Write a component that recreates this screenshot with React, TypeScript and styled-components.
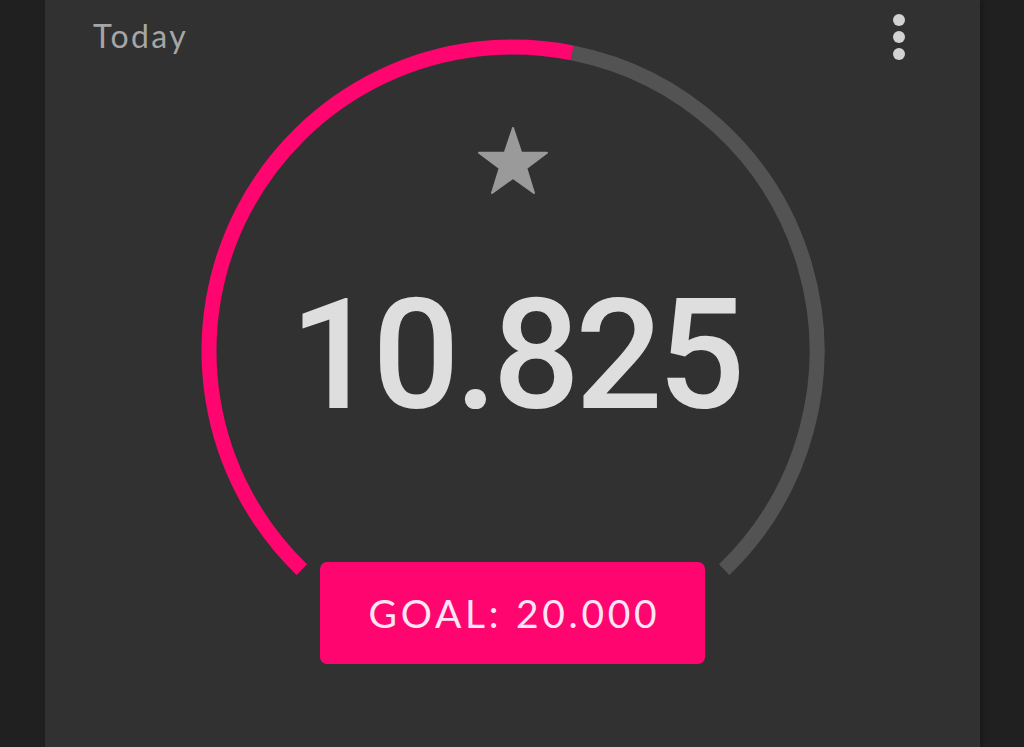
import * as React from "react";
import styled, { createGlobalStyle } from "styled-components";

const GlobalStyle = createGlobalStyle`
  html, body {
    margin: 0;
    padding: 0;
    background: #202020;
    overflow: hidden;
  }
`;

const Page = styled.div`
  display: flex;
  padding-left: 45px;
  height: 747px;
`;

const Card = styled.div`
  width: 935px;
  height: 747px;
  background: #313131;
  box-shadow: 3px 0 5px rgba(0, 0, 0, 0.25);
  display: grid;
  grid-template-columns: 1fr;
  grid-template-rows: auto;
  align-items: start;
`;

const Header = styled.div`
  grid-area: 1 / 1;
  display: flex;
  justify-content: space-between;
  align-items: flex-start;
  padding: 14px 75px 0 48px;
  position: relative;
  z-index: 1;
`;

const Title = styled.span`
  margin-top: 6px;
  font-family: Lato, "Open Sans", sans-serif;
  font-size: 32px;
  line-height: 1;
  letter-spacing: 2.4px;
  color: #a6a6a6;
`;

const MenuButton = styled.div`
  display: flex;
  flex-direction: column;
  gap: 5px;
  cursor: pointer;
`;

const Dot = styled.span`
  width: 12px;
  height: 12px;
  border-radius: 50%;
  background: #d2d2d2;
`;

const Gauge = styled.div`
  grid-area: 1 / 1;
  justify-self: center;
  margin-top: 31px;
  width: 640px;
  height: 640px;
  position: relative;
  display: flex;
  flex-direction: column;
  align-items: center;
`;

const Ring = styled.svg`
  position: absolute;
  inset: 0;
`;

const StarIcon = styled.svg`
  margin-top: 96px;
  position: relative;
`;

const Count = styled.div`
  margin-top: 82px;
  margin-right: -5px;
  position: relative;
  font-family: Roboto, "Open Sans", sans-serif;
  font-size: 154px;
  font-weight: 500;
  letter-spacing: -5px;
  line-height: 1;
  height: 154px;
  color: #dedede;
`;

const GoalButton = styled.button`
  margin-top: 129px;
  position: relative;
  width: 385px;
  height: 102px;
  border: none;
  border-radius: 7px;
  background: #ff0570;
  color: #ffe4f4;
  font-family: Lato, "Open Sans", sans-serif;
  font-size: 39px;
  letter-spacing: 3.7px;
  padding: 0 0 0 4px;
  cursor: pointer;
`;

const STEPS = 10825;
const GOAL = 20000;
const R = 304;
const C = 320;
const SPAN = 136;

const point = (deg: number) => {
  const a = (deg * Math.PI) / 180;
  return [C + R * Math.sin(a), C - R * Math.cos(a)];
};

const arc = (from: number, to: number) => {
  const [x1, y1] = point(from);
  const [x2, y2] = point(to);
  const large = to - from > 180 ? 1 : 0;
  return `M ${x1} ${y1} A ${R} ${R} 0 ${large} 1 ${x2} ${y2}`;
};

const formatNumber = (n: number) =>
  n.toString().replace(/\B(?=(\d{3})+(?!\d))/g, ".");

export default function App() {
  const progress = Math.min(STEPS / GOAL, 1);
  const split = -SPAN + progress * SPAN * 2;

  return (
    <>
      <GlobalStyle />
      <Page>
        <Card>
          <Header>
            <Title>Today</Title>
            <MenuButton>
              <Dot />
              <Dot />
              <Dot />
            </MenuButton>
          </Header>
          <Gauge>
            <Ring width={640} height={640} viewBox="0 0 640 640">
              <path d={arc(split, SPAN)} fill="none" stroke="#535353" strokeWidth={15} />
              <path d={arc(-SPAN, split)} fill="none" stroke="#ff0570" strokeWidth={15} />
            </Ring>
            <StarIcon width={70} height={70} viewBox="0 0 70 70">
              <polygon
                points="35,1 43.2,25.5 69,25.7 48.3,41.1 56,66 35,51 14,66 21.7,41.1 1,25.7 26.8,25.5"
                fill="#9a9a9a"
                stroke="#9a9a9a"
                strokeWidth={2}
                strokeLinejoin="round"
              />
            </StarIcon>
            <Count>{formatNumber(STEPS)}</Count>
            <GoalButton>GOAL: {formatNumber(GOAL)}</GoalButton>
          </Gauge>
        </Card>
      </Page>
    </>
  );
}
